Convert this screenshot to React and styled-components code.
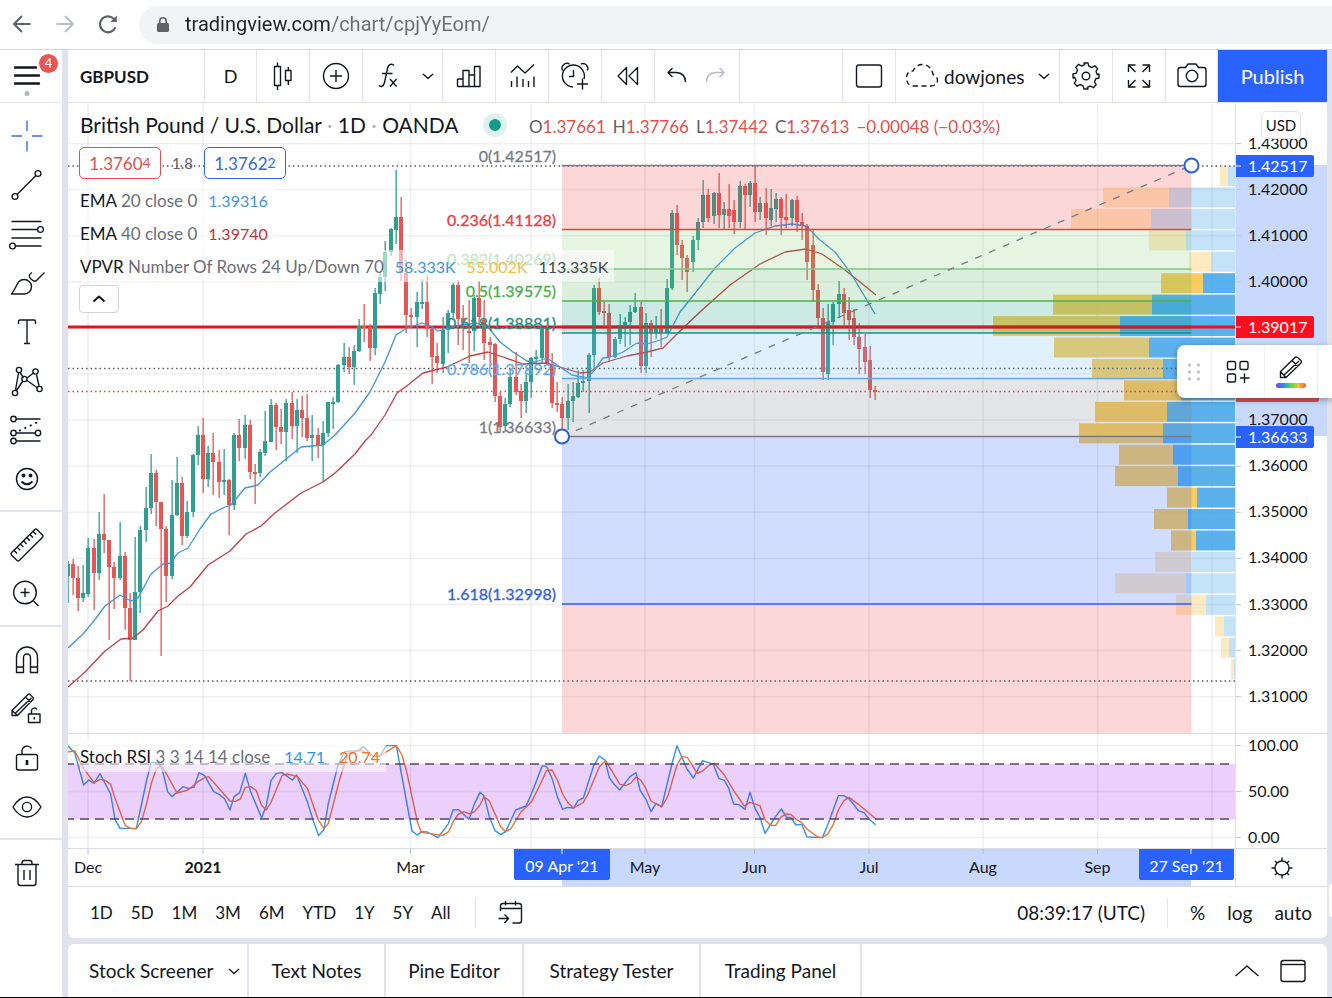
import React from "react";
import styled, { createGlobalStyle } from "styled-components";

const INK = "#131722";
const LINE = "#e0e3eb";
const BLUE = "#2962ff";
const FONT = '"Trebuchet MS", Lato, "Open Sans", sans-serif';

const Global = createGlobalStyle`
  *, *::before, *::after { box-sizing: border-box; }
  body { margin: 0; background: #000; font-family: ${FONT}; color: ${INK}; }
  button, input { font: inherit; color: inherit; margin: 0; padding: 0; border: 0; background: none; }
  button { cursor: pointer; }
`;

/* ---------- page frame ---------- */

const Page = styled.div`
  display: flex;
  flex-direction: column;
  overflow: hidden;
  background: ${LINE};
  border-bottom: 1px solid #000;
`;

const BrowserBar = styled.header`
  display: flex;
  align-items: center;
  height: 50px;
  padding-left: 4px;
  background: #fff;
  border-bottom: 1px solid #d3d6dc;
`;

const NavButton = styled.button`
  display: grid;
  place-items: center;
  width: 36px;
  height: 36px;
  margin-right: 7px;
  color: ${(p) => (p.$muted ? "#b9bcc0" : "#5f6368")};
`;

const Address = styled.label`
  display: flex;
  align-items: center;
  flex: 1;
  height: 38px;
  margin-left: 6px;
  padding-left: 16px;
  gap: 14px;
  border-radius: 19px 0 0 19px;
  background: #f1f3f4;
  color: #5f6368;
`;

const Url = styled.input`
  flex: 1;
  min-width: 0;
  height: 34px;
  padding-bottom: 2px;
  outline: 0;
  font-family: Roboto, "Liberation Sans", sans-serif;
  font-size: 20px;
  color: transparent;
  background: linear-gradient(90deg, #202124 146px, #6a6d72 146px);
  background-clip: text;
`;

const Body = styled.div`
  position: relative;
  display: grid;
  grid-template-columns: 62px minmax(0, 1fr);
  column-gap: 6px;
  padding-right: 5px;
`;

/* ---------- drawing toolbar ---------- */

const Side = styled.nav`
  display: flex;
  flex-direction: column;
  background: #fff;
`;

const MenuButton = styled.button`
  position: relative;
  display: grid;
  place-items: center;
  height: 53px;
  padding-right: 8px;
  border-bottom: 1px solid ${LINE};
`;

const Badge = styled.span`
  position: absolute;
  top: 4px;
  left: 39px;
  width: 19px;
  height: 19px;
  border-radius: 50%;
  background: #eb5454;
  color: #fff;
  font-size: 13px;
  line-height: 19px;
`;

const ToolGroup = styled.div`
  display: flex;
  flex-direction: column;
  padding: 8px 8px 7px 0;
  border-bottom: 2px solid ${LINE};
  &:last-child { border-bottom: 0; }
`;

const Tool = styled.button`
  display: grid;
  place-items: center;
  height: 49px;
  color: ${(p) => (p.$active ? "#3c6fd6" : INK)};
`;

/* ---------- main column ---------- */

const Main = styled.main`
  display: flex;
  flex-direction: column;
  min-width: 0;
`;

const Toolbar = styled.div`
  display: flex;
  height: 53px;
  background: #fff;
  border-bottom: 1px solid ${LINE};
`;

const Cell = styled.button`
  display: grid;
  place-items: center;
  width: ${(p) => p.$w || 53}px;
  border-right: 1px solid ${LINE};
  font-size: 18px;
`;

const SymbolButton = styled.button`
  width: 137px;
  padding-left: 12px;
  border-right: 1px solid ${LINE};
  font-size: 17px;
  font-weight: 700;
  text-align: left;
`;

const CellPair = styled.div`
  display: flex;
  align-items: center;
  width: ${(p) => p.$w}px;
  padding-left: ${(p) => p.$pad || 0}px;
  border-right: 1px solid ${LINE};
`;

const LayoutName = styled.button`
  display: flex;
  align-items: center;
  gap: 4px;
  width: 132px;
  height: 52px;
  padding-left: 8px;
  font-size: 19px;
`;

const IconButton = styled.button`
  display: grid;
  place-items: center;
  align-self: center;
  width: ${(p) => p.$w || 38}px;
  height: 40px;
  color: ${(p) => (p.$muted ? "#b8bbc4" : INK)};
`;

const Spacer = styled.div`
  flex: 1;
  border-right: ${(p) => (p.$ruled ? `1px solid ${LINE}` : 0)};
`;

const Publish = styled.button`
  width: 109px;
  background: ${BLUE};
  color: #fff;
  font-size: 20px;
`;

const ChartRow = styled.section`
  position: relative;
  display: grid;
  grid-template-columns: minmax(0, 1fr) 92px;
  height: ${(p) => p.$h}px;
  background: #fff;
  border-bottom: 1px solid #d9dce3;
`;

const Canvas = styled.svg`
  display: block;
  width: 100%;
  height: 100%;
  font-family: ${FONT};
`;

const AxisSvg = styled(Canvas)`
  border-left: 1px solid ${LINE};
`;

const Legend = styled.div`
  position: absolute;
  top: 6px;
  left: 12px;
  display: flex;
  flex-direction: column;
  align-items: flex-start;
`;

const TitleRow = styled.div`
  display: flex;
  align-items: center;
  height: 32px;
  white-space: pre;
`;

const Title = styled.h1`
  margin: 0;
  width: 403px;
  padding-bottom: 2px;
  font-size: 21px;
  font-weight: 400;
  i { color: #b2b5be; font-style: normal; }
`;

const Status = styled.span`
  width: 24px;
  height: 24px;
  margin-right: 22px;
  border: 6px solid #dff1ef;
  border-radius: 50%;
  background: #179a88;
`;

const Ohlc = styled.span`
  display: flex;
  gap: 7px;
  padding-top: 2px;
  font-size: 17px;
  color: #5d606b;
  b { font-weight: 400; color: #e0504e; }
`;

const QuoteRow = styled.div`
  display: flex;
  align-items: center;
  height: 34px;
  margin: 5px 0 4px -1px;
  gap: 11px;
  font-size: 15px;
  color: #5d606b;
`;

const Quote = styled.button`
  width: 82px;
  height: 32px;
  border: 1px solid currentColor;
  border-radius: 5px;
  background: #fff;
  font-size: 17px;
  color: ${(p) => p.$color};
  sup { font-size: 14px; vertical-align: 2px; line-height: 0; }
`;

const Study = styled.div`
  display: flex;
  align-items: center;
  height: 32px;
  margin-bottom: 1px;
  padding-right: 6px;
  gap: ${(p) => p.$gap || 11}px;
  background: rgba(255, 255, 255, 0.55);
  font-size: 17px;
  white-space: nowrap;
  color: ${INK};
  em { font-style: normal; color: #6a6d78; }
`;

const Value = styled.span`
  font-size: 16px;
  color: ${(p) => p.$color};
`;

const Collapse = styled.button`
  display: grid;
  place-items: center;
  width: 40px;
  height: 28px;
  margin: 2px 0 0 -1px;
  border: 1px solid #d1d4dc;
  border-radius: 4px;
  background: #fff;
`;

const Currency = styled.button`
  position: absolute;
  top: 8px;
  right: 26px;
  width: 40px;
  height: 28px;
  border: 1px solid ${LINE};
  border-radius: 5px;
  background: #fff;
  font-size: 15px;
`;

const StudyOverlay = styled.div`
  position: absolute;
  top: 6px;
  left: 12px;
`;

const Bar = styled.div`
  display: flex;
  align-items: center;
  height: 51px;
  padding: 0 15px 0 22px;
  background: #fff;
  border-radius: 0 0 6px 6px;
`;

const Ranges = styled.div`
  display: flex;
  gap: 18px;
  padding-right: 24px;
  font-size: 17px;
`;

const Rule = styled.span`
  width: 1px;
  height: 30px;
  background: ${LINE};
`;

const Modes = styled.div`
  display: flex;
  align-items: center;
  gap: 22px;
  padding-left: 22px;
  font-size: 19px;
`;

const Tabs = styled.footer`
  display: flex;
  height: 53px;
  margin-top: 6px;
  background: #fff;
  border-radius: 6px 6px 0 0;
`;

const Tab = styled.button`
  display: flex;
  align-items: center;
  justify-content: ${(p) => (p.$menu ? "flex-start" : "center")};
  gap: 14px;
  width: ${(p) => p.$w}px;
  padding-left: ${(p) => (p.$menu ? 21 : 0)}px;
  border-right: 2px solid ${LINE};
  font-size: 19px;
`;

const Floating = styled.div`
  position: absolute;
  top: 295px;
  right: 0;
  display: flex;
  width: 155px;
  height: 53px;
  border-radius: 8px 0 0 8px;
  background: #fff;
  box-shadow: 0 2px 6px rgba(0, 0, 0, 0.35);
`;

const FloatCell = styled.button`
  display: grid;
  place-items: center;
  width: ${(p) => p.$w}px;
  border-right: 1px solid #eef0f4;
`;

const Handle = styled.span`
  position: absolute;
  right: 0;
  top: 834px;
  width: 3px;
  height: 33px;
  border-radius: 3px 0 0 3px;
  background: #fff;
`;

const AxisCorner = styled.button`
  display: grid;
  place-items: center;
  border-left: 1px solid ${LINE};
`;

/* ---------- icons, drawn round their own centre ---------- */

const Icon = ({ size = 36, sw = 1.4, children }) => (
  <svg
    width={size}
    height={size}
    viewBox={`${-size / 2} ${-size / 2} ${size} ${size}`}
    fill="none"
    stroke="currentColor"
    strokeWidth={sw}
    strokeLinejoin="round"
    aria-hidden="true"
  >
    {children}
  </svg>
);

const Chevron = () => (
  <Icon size={14}><path d="M-5-2 0 2.500 5-2" /></Icon>
);

const icons = {
  cross: <path d="M0-15.500v10.500M0 5v10.500M-15.500 0h10.500M5 0h10.500" />,
  trend: (
    <>
      <circle cx="11" cy="-11.500" r="2.900" />
      <circle cx="-12" cy="11.500" r="2.900" />
      <path d="M9-9.500-10 9.500" />
    </>
  ),
  fib: (
    <>
      <path d="M-15.500-12.500h30M-15.500-4.500h26M-15.500 4h30M-12 12h26.500" />
      <circle cx="13.500" cy="-4.500" r="2.900" />
      <circle cx="-14.500" cy="12" r="2.900" />
    </>
  ),
  brush: (
    <path d="M-15.500 11C-10 5-10.500-3.500-3-3.500A7 7 0 0 1-2.500 11ZM5-10.500c-3.500 2-3 4.500-1.500 6l3 2.500h2.500l8.500-8.500" />
  ),
  text: <path d="M-8.500-8v-2.500q0-1.500 1.500-1.500H7q1.500 0 1.500 1.500V-8M0-12v23.500M-3 11.500h6" />,
  pattern: (
    <>
      <path d="M-11.500 9-8.500-8M-7-8.500-3.500-3.500M-4.500.500-10.500 9.500M0-3 6.500-8M9.500-6.500l2.500 11.500M0-.500 10 6.500" />
      <circle cx="-8" cy="-11" r="2.600" />
      <circle cx="8.500" cy="-9.500" r="2.600" />
      <circle cx="-2.500" cy="-2" r="2.600" />
      <circle cx="-12" cy="12" r="2.600" />
      <circle cx="12.500" cy="8" r="2.600" />
    </>
  ),
  forecast: (
    <>
      <path d="M-11-11H13.500M-11 3H8M-11 11H13.500" />
      <path d="M-8 1 13-9" strokeDasharray="2 4" strokeWidth="1.800" />
      <circle cx="-13.500" cy="-11" r="2.700" />
      <circle cx="-13.500" cy="3" r="2.700" />
      <circle cx="11" cy="3" r="2.700" />
      <circle cx="-13.500" cy="11" r="2.700" />
    </>
  ),
  smile: (
    <>
      <circle r="10.500" />
      <circle cx="-3.500" cy="-3.500" r="1.300" fill="currentColor" />
      <circle cx="3.500" cy="-3.500" r="1.300" fill="currentColor" />
      <path d="M-5.500 2.500Q0 8 5.500 2.500" strokeWidth="1.800" />
    </>
  ),
  ruler: (
    <g transform="rotate(-45)">
      <rect x="-18" y="-5.500" width="36" height="11" rx="1.500" />
      <path d="M-13-5.500v4.500M-8.500-5.500v4.500M-4-5.500v4.500M.500-5.500v4.500M5-5.500v4.500M9.500-5.500v4.500M14-5.500v4.500" />
    </g>
  ),
  zoom: (
    <>
      <circle cx="-2" cy="-1.500" r="11.300" />
      <path d="M-2-6v9M-6.500-1.500h9M6.500 7l5 5" />
    </>
  ),
  magnet: (
    <path d="M-10.500 12.500V-2.500a10.500 10.500 0 0 1 21 0v15h-7V-2.500a3.500 3.500 0 0 0-7 0v15ZM-10.500 7h7M3.500 7h7" />
  ),
  pencilLock: (
    <>
      <path d="M-15 6.500v-5L1-14.500q1-1 2 0L6-11.500q1 1 0 2L-9.500 6.500ZM-15 1.500l5.500 5M-11.500 4 4.500-11M-1.500-12l5.500 5.500" />
      <path d="M1.500 5h11.500v8.500H1.500ZM4.500 5V1.500a3 3 0 0 1 5.500-1M7.200 8v2.500" />
    </>
  ),
  lock: (
    <>
      <rect x="-10.500" y="-3.500" width="21" height="15.500" rx="2" />
      <path d="M-5-3.500V-7.500a5.200 5.200 0 0 1 9.500-2" />
      <path d="M0 2v5" strokeWidth="2.600" />
    </>
  ),
  eye: (
    <>
      <path d="M-14 0Q-8-10 0-10T14 0Q8 10 0 10T-14 0Z" />
      <circle r="4.600" />
    </>
  ),
  trash: (
    <path d="M-12-8.500h24M-5-8.500v-1.500q0-2.500 2.500-2.500h5q2.500 0 2.500 2.500v1.500M-9-8.500V10q0 2.500 2.500 2.500h13q2.500 0 2.500-2.500V-8.500M-3-3V7M3-3V7" />
  ),
  candles: <path d="M-8.500-9.500h6v19h-6ZM-5.500-13.500v4M-5.500 9.500v4.500M2.500-5.500h5.500v10H2.500ZM5.300-9v3.500M5.300 4.500v4.500" />,
  compare: (
    <>
      <circle r="12.500" />
      <path d="M-6 0H6M0-6V6" />
    </>
  ),
  fx: (
    <path d="M6-10.500C4.500-12.500.500-12.500-.500-7.500L-3.500 6.500C-4.500 11-7.500 11-9 9.500M-6-2.500H4.500M2 3l6.500 7.500M8.500 3 2 10.500" />
  ),
  bars: <path d="M-11.500 3h5.500v7.500M-6 10.500V-5.500H0v16M0-1h5.500v11.500M5.500-1V-9.500H11V10.500H-11.500V3" />,
  indicators: (
    <path d="M-11-3.500-4.500-10 3-3 12-11.500M-10.500 5v6M-5 .500V11M1 3v8M6.500 5v6M12 .500V11" />
  ),
  alarm: (
    <path d="M9 3A11 11 0 1 0-2 11M-12.500-5.500a5 5 0 0 1 7-6.500M6-12a5 5 0 0 1 6.500 6.500M-1.500-6V.500H-6M7.500 2.500v11M2 8h11" />
  ),
  rewind: <path d="M-1.500-8.500v17L-10 0ZM9.500-8.500v17L1 0Z" />,
  undo: <path d="M-4.500-8-9-3.500-4.500 1M-9-3.500H-1Q8.500-3 8.500 6" />,
  redo: <path d="M4.500-8 9-3.500 4.500 1M9-3.500H1Q-8.500-3-8.500 6" />,
  square: <rect x="-12.500" y="-11" width="25" height="22" rx="2.500" />,
  cloud: (
    <path
      d="M-9 10H9c3.500 0 6.500-2 6.500-5.500S13-.500 11-1.500C10-7.500 6-11.500 0-11.500-4.500-11.500-7.500-8-9-5-14-5-16-1-15.500 3-15 8-12 10-9 10Z"
      strokeDasharray="5 3.500"
    />
  ),
  gear: (
    <>
      <path d="M-2-13H2l.8 3.200 3.200 1.300 2.800-1.700 2.900 2.900-1.700 2.800 1.300 3.200L13-2V2l-3.200.8-1.300 3.200 1.700 2.800-2.900 2.900-2.800-1.700-3.200 1.300L2 13h-4l-.8-3.200-3.200-1.300-2.800 1.700-2.900-2.900 1.700-2.800-1.300-3.200L-13 2v-4l3.200-.8 1.300-3.200-1.700-2.800 2.900-2.900 2.800 1.700 3.200-1.300Z" />
      <circle r="3.800" />
    </>
  ),
  expand: (
    <path d="M-10.500-4v-7h7M-10.500-11l7 7M3.500-11h7v7M10.500-11l-7 7M-10.500 4v7h7M-10.500 11l7-7M3.500 11h7V4M10.500 11l-7-7" />
  ),
  camera: (
    <>
      <path d="M-11.500-8.500h5l2.500-3.500H4l2.500 3.500h5q2.500 0 2.500 2.500V8q0 2.500-2.500 2.500h-23Q-14 10.500-14 8V-6q0-2.500 2.500-2.500Z" />
      <circle r="5.700" />
    </>
  ),
  goto: (
    <path d="M-9.500-2V-7q0-2.500 2.500-2.500H9q2.500 0 2.500 2.500V7.500Q11.500 10 9 10H2.500M-9.500-4.500h21M-4.500-12v4.500M5.500-12v4.500M-11.500 5.500h10M-5.500 1.500l4 4-4 4.500" />
  ),
  up: <path d="M-11.500 5 0-5 11.500 5" />,
  windowed: (
    <>
      <rect x="-12" y="-10.500" width="24" height="21" rx="2.500" />
      <path d="M-12-6.500h24" />
    </>
  ),
  templates: (
    <>
      <rect x="-10.500" y="-10.500" width="8" height="8" rx="1.500" />
      <rect x="2" y="-10.500" width="8" height="8" rx="1.500" />
      <rect x="-10.500" y="2" width="8" height="8" rx="1.500" />
      <path d="M6.500 1.500v9.500M2 6h9.500" />
    </>
  ),
};

/* ---------- market data, in page pixels ---------- */

// one row per day: high, body top, body bottom, low; a leading "-" marks a falling day
const DAYS = `561 564 576 603|-559 564 578 595|-566 578 598 611|565 593 598 602|538 548 594 597|-539 548 573 610|512 534 573 580
-494 534 540 553|-540 540 567 640|-562 567 578 609|522 556 578 580|-552 556 608 630|-593 608 640 681|537 592 640 640
526 530 592 613|487 508 530 542|454 473 508 514|-470 473 502 526|-502 502 529 656|-526 529 576 602|480 515 576 579
457 483 515 516|-477 483 536 545|501 512 536 538|454 455 512 517|426 435 455 465|-418 435 479 493|446 453 479 487
-433 453 462 495|-450 462 482 498|449 480 482 495|-479 480 505 535|433 435 505 510|-419 435 448 461|415 425 448 459
-420 425 472 479|-464 472 474 504|449 452 473 477|411 441 453 456|399 405 442 442|-403 405 427 450|-409 427 432 444
399 403 432 461|-392 403 426 439|399 410 426 453|-396 410 418 437|-394 418 438 441|415 435 438 461|-428 435 445 458
421 433 445 482|402 402 433 437|397 402 404 429|364 365 402 403|343 357 365 372|-347 357 367 374|345 351 367 385
319 326 351 352|-304 326 328 342|-324 327 348 361|288 293 348 355|272 277 294 304|241 252 277 291|228 229 252 256
170 217 230 244|-197 217 273 281|-260 273 315 333|-308 315 317 328|292 302 317 347|279 302 304 309|-275 302 329 337
-328 329 357 384|-343 356 363 373|317 330 364 373|310 313 330 353|283 285 313 318|-280 285 319 345|-305 318 323 350
-300 331 333 363|295 298 331 351|-281 298 317 325|-300 320 343 360|-337 342 345 366|-343 344 396 402|-392 396 427 432
398 404 426 432|370 377 404 407|-352 377 392 395|-384 391 401 418|373 382 401 413|357 358 382 398|350 357 359 363
327 328 358 363|-328 328 364 365|-353 364 403 408|-382 403 405 412|-397 404 418 430|384 401 418 430|382 396 401 422
370 383 397 398|370 381 383 392|353 355 381 413|285 288 355 370|-278 288 312 315|-302 311 313 327|-304 313 357 362
337 339 357 358|314 325 339 344|317 322 329 347|305 312 322 345|293 307 312 313|-302 307 366 373|313 323 366 373
-320 323 333 357|316 326 333 339|-309 327 333 347|279 288 333 333|210 213 288 290|-205 213 245 255|-240 245 258 280
-255 258 272 292|236 240 262 272|218 222 240 250|180 195 222 228|-189 195 218 222|192 193 216 224|-173 193 215 228
202 209 215 230|-184 209 216 228|-200 210 222 234|181 186 222 228|-184 186 195 230|181 183 195 207|-166 183 212 222
197 203 212 220|-188 203 218 235|189 208 220 226|193 199 209 222|-197 199 218 235|-194 217 220 228|199 200 218 226
-196 200 222 232|-213 222 226 240|-224 226 262 280|-230 245 290 302|-284 290 318 328|-308 318 372 380|304 322 374 380
302 304 322 345|281 294 304 318|-288 294 313 328|-297 310 320 340|-309 318 337 345|-323 337 349 374|-334 347 362 374
-346 360 390 398|-386 390 392 400`
  .split(/[|\n]/)
  .map((row) => {
    const [h, t, b, l] = row.replace("-", "").split(" ").map(Number);
    return { down: row[0] === "-", h, t, b, l };
  });

const dayX = (i) => Math.round(67.5 + i * 5.21);

const EMA20 =
  "68,648 83,634 93,622 105,606 120,595 131,601 138,598 151,574 163,564 170,563 178,553 188,548 200,529 211,514 225,507 231,505 245,488 258,485 270,472 285,460 301,447 323,445 335,435 355,413 370,392 385,362 396,335 407,328 422,323 432,327 438,331 455,326 477,323 488,327 500,342 513,352 527,361 535,362 547,358 560,367 572,375 587,378 593,372 603,358 610,357 623,352 637,343 647,344 660,340 667,337 680,312 700,287 715,268 735,248 755,233 775,226 792,224 806,226 820,240 835,252 850,272 862,292 875,314";
const EMA40 =
  "68,687 85,672 105,651 121,639 133,638 143,630 158,611 168,606 178,596 190,587 208,565 230,551 246,534 261,526 275,513 301,493 323,482 335,473 355,454 365,441 371,435 385,415 397,393 408,385 423,373 447,367 470,356 488,352 503,357 523,364 547,363 563,368 580,373 590,372 603,363 627,356 647,352 663,348 678,333 700,312 730,285 760,264 785,252 806,249 822,254 845,270 860,282 876,295";

// left edge, yellow/blue split, strong colour
const PROFILE = [
  [1220, 1228], [1103, 1169], [1071, 1151], [1149, 1186], [1189, 1211], [1161, 1203, 1], [1053, 1152, 1],
  [993, 1120, 1], [1054, 1149, 1], [1092, 1163, 1], [1124, 1181, 1], [1095, 1167, 1], [1079, 1163, 1],
  [1119, 1173, 1], [1115, 1178, 1], [1167, 1197, 1], [1154, 1188, 1], [1171, 1196, 1], [1155, 1192],
  [1115, 1186], [1176, 1206], [1215, 1224], [1221, 1229], [1231, 1234],
];

const FIB = [
  { y: 165.5, label: "0(1.42517)", color: "#787b86", fill: "rgba(242,54,54,.2)" },
  { y: 229.5, label: "0.236(1.41128)", color: "#e8403f", fill: "rgba(129,199,110,.2)" },
  { y: 269, label: "0.382(1.40269)", color: "#81c784", fill: "rgba(76,175,80,.2)" },
  { y: 301, label: "0.5(1.39575)", color: "#4caf50", fill: "rgba(0,150,120,.2)" },
  { y: 333, label: "0.618(1.38881)", color: "#199184", fill: "rgba(100,181,246,.2)" },
  { y: 378.5, label: "0.786(1.37892)", color: "#64a8e6", fill: "rgba(120,123,130,.2)" },
  { y: 436.5, label: "1(1.36633)", color: "#787b86", fill: "rgba(41,98,255,.22)" },
  { y: 604, label: "1.618(1.32998)", color: "#3060e0", fill: "rgba(242,54,54,.2)" },
  { y: 733 },
];

const MONTHS = [
  [88, "Dec"], [203, "2021"], [410.5, "Mar"], [531, ""], [645, "May"], [754.5, "Jun"], [869, "Jul"], [983, "Aug"], [1097.5, "Sep"], [1212, ""],
];

const PRICES = Array.from({ length: 13 }, (_, i) => ({ y: 143.5 + i * 46.1, label: (1.43 - i / 100).toFixed(5) }));

// oscillator samples, three units per pixel, measured from the pane's left top corner
const K_LINE =
  "0,48 20,68 47,165 62,150 78,160 96,131 128,192 141,268 156,295 205,295 218,235 236,150 250,97 272,97 283,120 299,185 312,200 345,170 360,175 378,172 393,128 410,137 437,185 455,194 470,207 486,240 498,200 515,188 532,130 548,185 581,264 595,225 609,152 625,130 642,128 673,150 686,135 718,215 735,270 752,317 768,298 781,220 810,105 830,65 870,62 887,50 915,80 935,80 955,47 985,47 1000,130 1032,303 1048,315 1062,305 1078,306 1110,323 1142,280 1155,240 1172,239 1203,268 1220,220 1236,187 1248,197 1264,260 1281,302 1298,314 1313,305 1343,240 1374,228 1391,190 1423,107 1436,110 1452,145 1468,200 1484,238 1498,232 1517,234 1530,212 1546,204 1576,110 1594,78 1611,90 1624,143 1638,162 1655,180 1686,140 1704,128 1716,180 1734,208 1749,245 1764,220 1781,230 1811,105 1827,47 1856,115 1876,144 1904,92 1936,103 1952,145 1969,151 1981,172 1997,222 2013,224 2031,238 2046,187 2061,235 2076,262 2091,310 2121,262 2140,237 2156,262 2168,262 2184,285 2201,283 2217,321 2263,323 2281,280 2311,197 2328,197 2341,205 2356,222 2371,242 2388,248 2406,270 2423,284";
const D_LINE =
  "0,66 20,62 47,115 78,158 96,148 112,151 128,163 141,205 172,287 188,295 205,296 220,275 236,220 250,160 265,117 280,105 300,140 327,189 360,180 390,155 410,143 422,140 486,213 502,214 517,207 532,172 548,170 565,182 580,225 594,240 609,217 642,137 658,132 688,140 718,175 750,268 768,296 781,280 815,148 840,70 880,60 915,80 940,75 985,47 1002,75 1016,125 1032,200 1048,275 1060,307 1125,316 1142,305 1157,272 1172,252 1187,245 1205,252 1220,245 1236,225 1248,200 1264,213 1298,290 1313,305 1328,297 1358,247 1391,215 1423,150 1436,121 1452,120 1468,150 1484,192 1501,220 1517,234 1546,217 1561,190 1594,110 1613,92 1656,163 1671,167 1688,160 1704,141 1718,150 1732,172 1749,213 1781,231 1799,200 1827,105 1842,80 1858,82 1888,130 1904,123 1924,105 1939,100 1969,135 1997,182 2029,228 2046,217 2076,227 2091,270 2108,286 2123,286 2140,260 2156,252 2168,253 2184,268 2201,277 2217,297 2249,321 2263,323 2279,312 2296,283 2311,240 2328,212 2343,202 2371,223 2423,266";

/* ---------- chart drawings ---------- */

const VGrid = ({ y1, y2 }) => (
  <g stroke="rgba(60,70,90,.08)" strokeWidth="1.500">
    {MONTHS.map(([x]) => <line key={x} x1={x} x2={x} y1={y1} y2={y2} />)}
  </g>
);

const PriceChart = () => (
  <Canvas role="img" aria-label="GBPUSD daily candles">
    <g transform="translate(-68 -103)">
      <VGrid y1="103" y2="733" />
      <g stroke="rgba(60,70,90,.08)" strokeWidth="1.500">
        {PRICES.map((p) => <line key={p.y} x1="68" x2="4000" y1={p.y} y2={p.y} />)}
      </g>
    </g>
    <svg x="100%" overflow="visible">
      <g transform="translate(-1235 -103)">
        {PROFILE.map(([x, mid, strong], i) => {
          const y = 166 + i * 21.44;
          return (
            <g key={i} opacity={strong ? 0.85 : 0.3}>
              <rect x={x} y={y} width={mid - x} height="20" fill={strong ? "#f7c446" : "#f9bd3c"} />
              <rect x={mid} y={y} width={1235 - mid} height="20" fill="#3fa4e8" />
            </g>
          );
        })}
      </g>
    </svg>
    <g transform="translate(-68 -103)">
      <line x1="68" x2="4000" y1="327" y2="327" stroke="#e3151c" strokeWidth="3" />
      <g strokeDasharray="1.500 3" strokeWidth="1.300">
        <line x1="68" x2="4000" y1="166" y2="166" stroke="#555a66" />
        <line x1="68" x2="4000" y1="368.500" y2="368.500" stroke="#555a66" />
        <line x1="68" x2="4000" y1="391.500" y2="391.500" stroke="#d04a4a" />
        <line x1="68" x2="4000" y1="681" y2="681" stroke="#555a66" />
      </g>
      {DAYS.map((d, i) => {
        const x = dayX(i);
        return (
          <g key={i} fill={d.down ? "#e65654" : "#319f8f"}>
            <rect x={x - 0.5} y={d.h} width="1.300" height={Math.max(1, d.l - d.h)} />
            <rect x={x - 2} y={d.t} width="4" height={Math.max(1.5, d.b - d.t)} />
          </g>
        );
      })}
      <g fill="none" strokeWidth="1.300" strokeLinejoin="round">
        <polyline points={EMA40} stroke="#c13f42" />
        <polyline points={EMA20} stroke="#3f95df" />
      </g>
      {FIB.slice(0, -1).map((f, i) => (
        <g key={f.label}>
          <rect x="562" y={f.y} width="629.500" height={FIB[i + 1].y - f.y} fill={f.fill} />
          <line x1="562" x2="1191.500" y1={f.y} y2={f.y} stroke={f.color} strokeWidth="1.400" />
          <text x="556" y={f.y - 4} textAnchor="end" fontSize="16" fill={f.color} stroke={f.color} strokeWidth="0.300">
            {f.label}
          </text>
        </g>
      ))}
      <line x1="562" x2="1191" y1="327" y2="327" stroke="#d8151c" strokeWidth="3" opacity="0.6" />
      <line x1="562" y1="436.500" x2="1191" y2="165.500" stroke="#787b86" strokeWidth="1.300" strokeDasharray="7 8" />
      <g fill="#fff" stroke="#2f5fd8" strokeWidth="2">
        <circle cx="562" cy="436.500" r="7" />
        <circle cx="1191.500" cy="165.500" r="7" />
      </g>
    </g>
  </Canvas>
);

const PriceTag = ({ y, color, label }) => (
  <g>
    <rect x="1230" y={y - 11} width="84" height="22" rx="2" fill={color} />
    <line x1="1235" x2="1241" y1={y} y2={y} stroke="#fff" />
    <text x="1248" y={y + 6} fontSize="16" fill="#fff">{label}</text>
  </g>
);

const PriceAxis = () => (
  <AxisSvg>
    <g transform="translate(-1236 -103)">
      <rect x="1235" y="165" width="92" height="271" fill="#c9d8fd" />
      {PRICES.map((p, i) => (
        <g key={p.y}>
          <line x1="1235" x2="1241" y1={p.y} y2={p.y} stroke="#c3c7d1" />
          {i !== 4 && i !== 5 && <text x="1248" y={p.y + 5} fontSize="16" fill={INK}>{p.label}</text>}
        </g>
      ))}
      <rect x="1235" y="380" width="84" height="22" rx="2" fill="#d65555" />
      <PriceTag y={166} color={BLUE} label="1.42517" />
      <PriceTag y={327} color="#fa0f1e" label="1.39017" />
      <PriceTag y={437} color={BLUE} label="1.36633" />
    </g>
  </AxisSvg>
);

const StochChart = () => (
  <Canvas role="img" aria-label="Stochastic RSI">
    <g transform="translate(-68 -734)">
      <VGrid y1="734" y2="849" />
      <g stroke="rgba(60,70,90,.08)" strokeWidth="1.500">
        <path d="M68 745.500H4000M68 791.500H4000M68 837.500H4000" />
      </g>
      <g fill="none" strokeWidth="4.200" strokeLinejoin="round" transform="translate(68 730) scale(.33333)">
        <polyline points={K_LINE} stroke="#2b93ef" />
        <polyline points={D_LINE} stroke="#f0702c" />
      </g>
      <rect x="68" y="764" width="4000" height="55.500" fill="rgba(151,21,231,.2)" />
      <path d="M65 764H4000M65 819H4000" stroke="#54466f" strokeWidth="1.500" strokeDasharray="9 6" />
    </g>
  </Canvas>
);

const StochAxis = () => (
  <AxisSvg>
    <g transform="translate(-1236 -734)" fontSize="16" fill={INK}>
      {[[745.5, "100.00"], [791.5, "50.00"], [837.5, "0.00"]].map(([y, label]) => (
        <g key={label}>
          <line x1="1235" x2="1241" y1={y} y2={y} stroke="#c3c7d1" />
          <text x="1248" y={y + 5}>{label}</text>
        </g>
      ))}
    </g>
  </AxisSvg>
);

const DateTag = ({ x, width, tick, label }) => (
  <g>
    <rect x={x} y="845" width={width} height="35" rx="2" fill={BLUE} />
    <line x1={tick} x2={tick} y1="849" y2="854" stroke="#fff" />
    <text x={x + width / 2} y="872" textAnchor="middle" fontSize="16" fill="#fff">{label}</text>
  </g>
);

const TimeAxis = () => (
  <Canvas>
    <g transform="translate(-68 -849)">
      <rect x="562" y="849" width="629" height="40" fill="#c9d8fd" />
      {MONTHS.filter((m) => m[1]).map(([x, label]) => (
        <g key={x}>
          <line x1={x} x2={x} y1="849" y2="854" stroke="#b6bac6" />
          <text x={x} y="873" textAnchor="middle" fontSize="16" fontWeight={label === "2021" ? 700 : 400} fill={INK}>
            {label}
          </text>
        </g>
      ))}
      <DateTag x={514} width={96} tick={562} label="09 Apr '21" />
      <DateTag x={1139} width={95} tick={1191} label="27 Sep '21" />
    </g>
  </Canvas>
);

/* ---------- page ---------- */

const TOOLS = [
  [["cross", "Cross"], ["trend", "Trend line"], ["fib", "Fib retracement"], ["brush", "Brush"], ["text", "Text"], ["pattern", "Pattern"], ["forecast", "Forecast"], ["smile", "Icons"]],
  [["ruler", "Measure"], ["zoom", "Zoom in"]],
  [["magnet", "Magnet"], ["pencilLock", "Stay in drawing mode"], ["lock", "Lock drawings"], ["eye", "Hide drawings"]],
  [["trash", "Remove"]],
];

const RANGES = ["1D", "5D", "1M", "3M", "6M", "YTD", "1Y", "5Y", "All"];

export default function App() {
  return (
    <Page>
      <Global />
      <BrowserBar>
        <NavButton aria-label="Back">
          <Icon size={24} sw={2}><path d="M8.500-1H-8M0-9-8-1 0 7" /></Icon>
        </NavButton>
        <NavButton aria-label="Forward" $muted>
          <Icon size={24} sw={2}><path d="M-8.500-1H8M0-9 8-1 0 7" /></Icon>
        </NavButton>
        <NavButton aria-label="Reload">
          <Icon size={24} sw={2.2}>
            <path d="M7.500 2A8 8 0 1 1 5.500-6.500L8-4" />
            <path d="M8.800-9.500V-3H2.300Z" fill="currentColor" stroke="none" />
          </Icon>
        </NavButton>
        <Address>
          <svg width="16" height="18" viewBox="0 0 16 18" fill="none" aria-hidden="true">
            <rect x="2" y="7" width="12" height="9" rx="1.500" fill="#5f6368" />
            <path d="M4.800 8V5a3.200 3.200 0 0 1 6.400 0v3" stroke="#5f6368" strokeWidth="1.600" />
          </svg>
          <Url aria-label="Address" defaultValue="tradingview.com/chart/cpjYyEom/" />
        </Address>
      </BrowserBar>

      <Body>
        <Side aria-label="Drawing tools">
          <MenuButton aria-label="Menu">
            <Icon size={40} sw={2.4}>
              <path d="M-12-8.500H9M-12-.500H12M-12 7.500H12" strokeLinecap="round" />
              <circle cy="17.500" r="2.500" fill="#b2b5be" stroke="none" />
            </Icon>
            <Badge>4</Badge>
          </MenuButton>
          {TOOLS.map((group, i) => (
            <ToolGroup key={i}>
              {group.map(([name, label]) => (
                <Tool key={name} aria-label={label} $active={name === "cross"}>
                  <Icon>{icons[name]}</Icon>
                </Tool>
              ))}
            </ToolGroup>
          ))}
        </Side>

        <Main>
          <Toolbar>
            <SymbolButton>GBPUSD</SymbolButton>
            <Cell $w={52}>D</Cell>
            <Cell aria-label="Candles"><Icon>{icons.candles}</Icon></Cell>
            <Cell aria-label="Compare"><Icon>{icons.compare}</Icon></Cell>
            <CellPair $w={80}>
              <IconButton $w={50} aria-label="Indicators"><Icon>{icons.fx}</Icon></IconButton>
              <IconButton $w={29} aria-label="Favourite indicators"><Chevron /></IconButton>
            </CellPair>
            <Cell aria-label="Financials"><Icon>{icons.bars}</Icon></Cell>
            <Cell aria-label="Templates"><Icon>{icons.indicators}</Icon></Cell>
            <Cell aria-label="Alert"><Icon>{icons.alarm}</Icon></Cell>
            <Cell aria-label="Replay"><Icon>{icons.rewind}</Icon></Cell>
            <CellPair $w={85} $pad={3}>
              <IconButton aria-label="Undo"><Icon>{icons.undo}</Icon></IconButton>
              <IconButton aria-label="Redo" $muted><Icon>{icons.redo}</Icon></IconButton>
            </CellPair>
            <Spacer $ruled />
            <Cell aria-label="Layout"><Icon>{icons.square}</Icon></Cell>
            <CellPair $w={164}>
              <LayoutName><Icon>{icons.cloud}</Icon>dowjones</LayoutName>
              <IconButton $w={31} aria-label="Layouts"><Chevron /></IconButton>
            </CellPair>
            <Cell aria-label="Settings"><Icon>{icons.gear}</Icon></Cell>
            <Cell aria-label="Full screen"><Icon>{icons.expand}</Icon></Cell>
            <Cell $w={52} aria-label="Snapshot"><Icon>{icons.camera}</Icon></Cell>
            <Publish>Publish</Publish>
          </Toolbar>

          <ChartRow $h={631}>
            <PriceChart />
            <PriceAxis />
            <Legend>
              <TitleRow>
                <Title>British Pound / U.S. Dollar <i>·</i> 1D <i>·</i> OANDA</Title>
                <Status />
                <Ohlc>
                  <span>O<b>1.37661</b></span>
                  <span>H<b>1.37766</b></span>
                  <span>L<b>1.37442</b></span>
                  <span>C<b>1.37613</b></span>
                  <b>−0.00048 (−0.03%)</b>
                </Ohlc>
              </TitleRow>
              <QuoteRow>
                <Quote $color="#e0504e">1.3760<sup>4</sup></Quote>
                1.8
                <Quote $color="#3766dc">1.3762<sup>2</sup></Quote>
              </QuoteRow>
              <Study><span>EMA <em>20 close 0</em></span><Value $color="#3f95df">1.39316</Value></Study>
              <Study><span>EMA <em>40 close 0</em></span><Value $color="#c83236">1.39740</Value></Study>
              <Study>
                <span>VPVR <em>Number Of Rows 24 Up/Down 70</em></span>
                <Value $color="#3f95df">58.333K</Value>
                <Value $color="#f1be49">55.002K</Value>
                <Value $color="#434651">113.335K</Value>
              </Study>
              <Collapse aria-label="Collapse legend">
                <Icon size={14} sw={2}><path d="M-5.500 2.500 0-2.500 5.500 2.500" /></Icon>
              </Collapse>
            </Legend>
            <Currency>USD</Currency>
          </ChartRow>

          <ChartRow $h={115}>
            <StochChart />
            <StochAxis />
            <StudyOverlay>
              <Study $gap={14}>
                <span>Stoch RSI <em>3 3 14 14 close</em></span>
                <Value $color="#2b93ef">14.71</Value>
                <Value $color="#f0702c">20.74</Value>
              </Study>
            </StudyOverlay>
          </ChartRow>

          <ChartRow $h={38}>
            <TimeAxis />
            <AxisCorner aria-label="Scale settings">
              <Icon size={24}>
                <circle r="7" />
                <path d="M0-10.500v3.500M0 7v3.500M-10.500 0H-7M7 0h3.500M-7-7l2 2M5 5l2 2M7-7 5-5M-5 5l-2 2" />
              </Icon>
            </AxisCorner>
          </ChartRow>

          <Bar>
            <Ranges>
              {RANGES.map((r) => <button key={r}>{r}</button>)}
            </Ranges>
            <Rule />
            <IconButton $w={68} aria-label="Go to date"><Icon>{icons.goto}</Icon></IconButton>
            <Spacer />
            <Modes><button>08:39:17 (UTC)</button><Rule /></Modes>
            <Modes>
              <button>%</button>
              <button>log</button>
              <button>auto</button>
            </Modes>
          </Bar>

          <Tabs>
            <Tab $w={181} $menu>Stock Screener <Chevron /></Tab>
            <Tab $w={137}>Text Notes</Tab>
            <Tab $w={138}>Pine Editor</Tab>
            <Tab $w={177}>Strategy Tester</Tab>
            <Tab $w={161}>Trading Panel</Tab>
            <Spacer />
            <IconButton $w={30} aria-label="Open panel"><Icon>{icons.up}</Icon></IconButton>
            <IconButton $w={68} aria-label="Maximise panel"><Icon>{icons.windowed}</Icon></IconButton>
          </Tabs>
        </Main>

        <Floating>
          <FloatCell $w={35} aria-label="Move toolbar">
            <Icon size={24}>
              <g fill="#c3c6ce" stroke="none">
                {[-7, 0, 7].map((y) => (
                  <g key={y}>
                    <circle cx="-4.500" cy={y} r="1.700" />
                    <circle cx="4.500" cy={y} r="1.700" />
                  </g>
                ))}
              </g>
            </Icon>
          </FloatCell>
          <FloatCell $w={53} aria-label="Template"><Icon>{icons.templates}</Icon></FloatCell>
          <FloatCell $w={53} aria-label="Line colour">
            <Icon>
              <defs>
                <linearGradient id="rainbow">
                  <stop offset="0" stopColor="#7a3ff0" />
                  <stop offset=".25" stopColor="#2f8ff0" />
                  <stop offset=".5" stopColor="#4be04a" />
                  <stop offset=".75" stopColor="#f4c22c" />
                  <stop offset="1" stopColor="#ef5a32" />
                </linearGradient>
              </defs>
              <path d="M-10.500 5.500v-6L4-14.500q1-1 2.500 0L10-11.500q1 1.500 0 2.500L-5 5.500ZM-10.500-.500-5 5.500M1-11.500 7-5.500M-7 3 8-11" />
              <rect x="-15" y="11" width="30" height="5" rx="2.500" fill="url(#rainbow)" stroke="none" />
            </Icon>
          </FloatCell>
        </Floating>
        <Handle />
      </Body>
    </Page>
  );
}
